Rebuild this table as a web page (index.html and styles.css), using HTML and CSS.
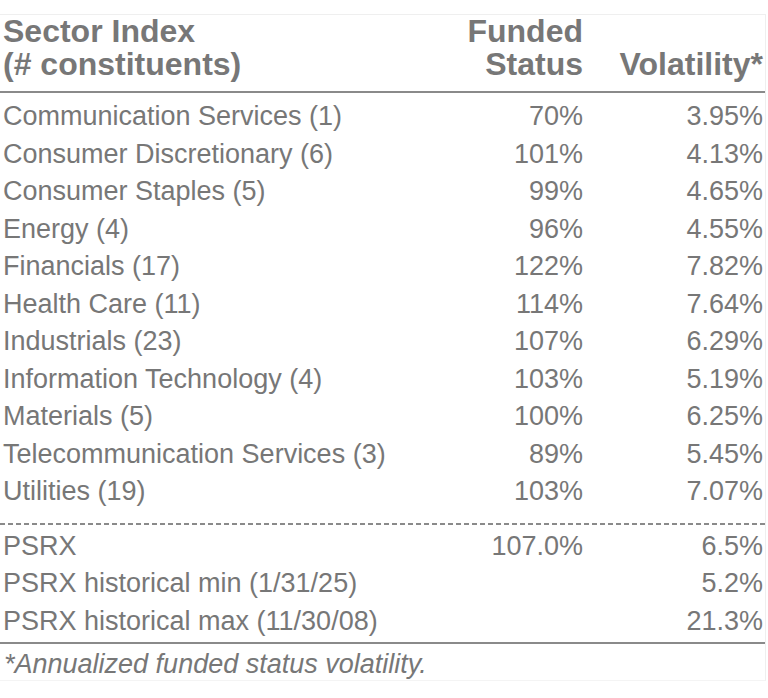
FILE: index.html
```html
<!DOCTYPE html>
<html>
<head>
<meta charset="utf-8">
<link rel="stylesheet" href="styles.css">
</head>
<body>
<div class="frame">
  <div class="head">
    <div class="c1"><span class="ln">Sector Index</span><span class="ln">(# constituents)</span></div>
    <div class="c2"><span class="ln">Funded</span><span class="ln">Status</span></div>
    <div class="c3"><span class="ln">Volatility*</span></div>
  </div>
  <div class="body">
    <div class="row"><div class="c1">Communication Services (1)</div><div class="c2">70%</div><div class="c3">3.95%</div></div>
    <div class="row"><div class="c1">Consumer Discretionary (6)</div><div class="c2">101%</div><div class="c3">4.13%</div></div>
    <div class="row"><div class="c1">Consumer Staples (5)</div><div class="c2">99%</div><div class="c3">4.65%</div></div>
    <div class="row"><div class="c1">Energy (4)</div><div class="c2">96%</div><div class="c3">4.55%</div></div>
    <div class="row"><div class="c1">Financials (17)</div><div class="c2">122%</div><div class="c3">7.82%</div></div>
    <div class="row"><div class="c1">Health Care (11)</div><div class="c2">114%</div><div class="c3">7.64%</div></div>
    <div class="row"><div class="c1">Industrials (23)</div><div class="c2">107%</div><div class="c3">6.29%</div></div>
    <div class="row"><div class="c1">Information Technology (4)</div><div class="c2">103%</div><div class="c3">5.19%</div></div>
    <div class="row"><div class="c1">Materials (5)</div><div class="c2">100%</div><div class="c3">6.25%</div></div>
    <div class="row"><div class="c1">Telecommunication Services (3)</div><div class="c2">89%</div><div class="c3">5.45%</div></div>
    <div class="row"><div class="c1">Utilities (19)</div><div class="c2">103%</div><div class="c3">7.07%</div></div>
  </div>
  <div class="dash"></div>
  <div class="summary">
    <div class="row"><div class="c1">PSRX</div><div class="c2">107.0%</div><div class="c3">6.5%</div></div>
    <div class="row"><div class="c1">PSRX historical min (1/31/25)</div><div class="c2"></div><div class="c3">5.2%</div></div>
    <div class="row"><div class="c1">PSRX historical max (11/30/08)</div><div class="c2"></div><div class="c3">21.3%</div></div>
  </div>
  <div class="note">*Annualized funded status volatility.</div>
</div>
</body>
</html>
```

FILE: styles.css
```css
html, body {
  margin: 0;
  padding: 0;
  background: #ffffff;
}

body {
  font-family: "Liberation Sans", Arial, sans-serif;
  color: #777777;
}

.frame {
  margin-top: 14px;
  width: 766px;
  height: 667px;
  border-top: 1px solid #efefef;
  border-right: 1px solid #efefef;
  border-bottom: 1px solid #f4f4f4;
  box-sizing: border-box;
}

.head,
.row {
  display: grid;
  grid-template-columns: 1fr 170px 182px;
}

.head {
  font-weight: bold;
  font-size: 32px;
  line-height: 33px;
  padding-top: 0;
  padding-bottom: 10px;
  border-bottom: 2px solid #8a8a8a;
  align-items: end;
}

.ln {
  display: block;
}

.c1 {
  padding-left: 3px;
  text-align: left;
  white-space: nowrap;
}

.c2,
.c3 {
  text-align: right;
}

.c3 {
  padding-right: 2px;
}

.body {
  padding-top: 5px;
  padding-bottom: 12px;
}

.dash {
  height: 2px;
  background: repeating-linear-gradient(to right, #8a8a8a 0, #8a8a8a 5px, transparent 5px, transparent 8px);
}

.row {
  font-size: 27px;
  line-height: 37.5px;
}

.summary {
  padding-top: 3px;
  padding-bottom: 2px;
  border-bottom: 2px solid #8a8a8a;
}

.note {
  font-style: italic;
  font-size: 27px;
  line-height: 36px;
  padding-top: 2px;
  padding-left: 4px;
}
```
